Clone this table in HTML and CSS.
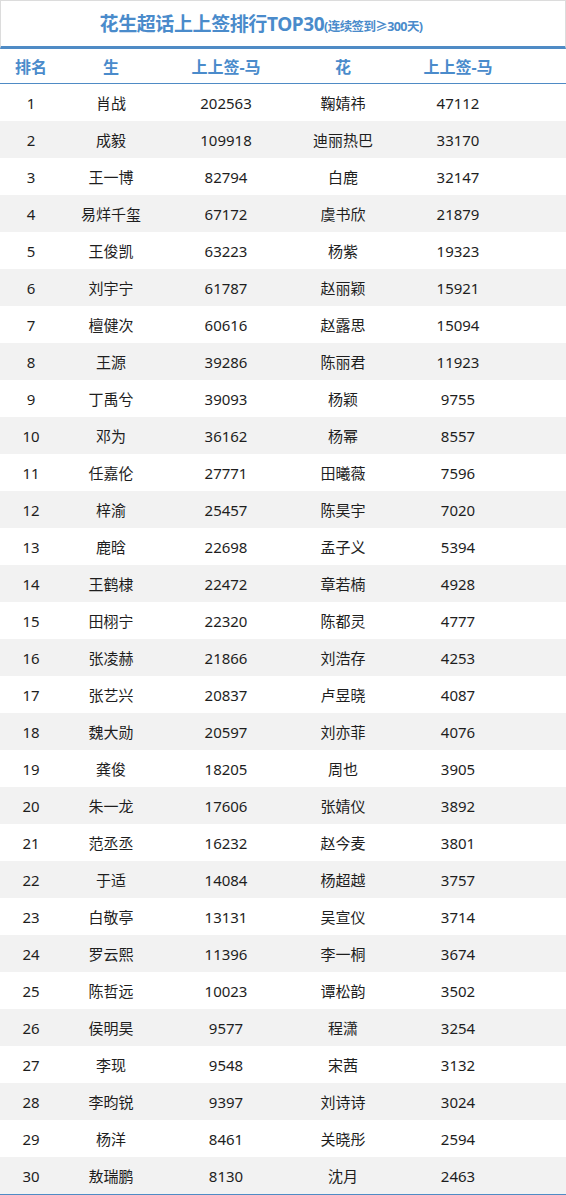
FILE: index.html
```html
<!DOCTYPE html>
<html lang="zh">
<head>
<meta charset="utf-8">
<link rel="stylesheet" href="styles.css">
</head>
<body>
<div class="board">
  <div class="title"><span class="main">花生超话上上签排行TOP30</span><span class="sub">(连续签到≥300天)</span></div>
  <div class="row head"><div>排名</div><div>生</div><div>上上签-马</div><div>花</div><div>上上签-马</div><div></div></div>
  <div class="body">
    <div class="row"><div>1</div><div>肖战</div><div>202563</div><div>鞠婧祎</div><div>47112</div><div></div></div>
    <div class="row"><div>2</div><div>成毅</div><div>109918</div><div>迪丽热巴</div><div>33170</div><div></div></div>
    <div class="row"><div>3</div><div>王一博</div><div>82794</div><div>白鹿</div><div>32147</div><div></div></div>
    <div class="row"><div>4</div><div>易烊千玺</div><div>67172</div><div>虞书欣</div><div>21879</div><div></div></div>
    <div class="row"><div>5</div><div>王俊凯</div><div>63223</div><div>杨紫</div><div>19323</div><div></div></div>
    <div class="row"><div>6</div><div>刘宇宁</div><div>61787</div><div>赵丽颖</div><div>15921</div><div></div></div>
    <div class="row"><div>7</div><div>檀健次</div><div>60616</div><div>赵露思</div><div>15094</div><div></div></div>
    <div class="row"><div>8</div><div>王源</div><div>39286</div><div>陈丽君</div><div>11923</div><div></div></div>
    <div class="row"><div>9</div><div>丁禹兮</div><div>39093</div><div>杨颖</div><div>9755</div><div></div></div>
    <div class="row"><div>10</div><div>邓为</div><div>36162</div><div>杨幂</div><div>8557</div><div></div></div>
    <div class="row"><div>11</div><div>任嘉伦</div><div>27771</div><div>田曦薇</div><div>7596</div><div></div></div>
    <div class="row"><div>12</div><div>梓渝</div><div>25457</div><div>陈昊宇</div><div>7020</div><div></div></div>
    <div class="row"><div>13</div><div>鹿晗</div><div>22698</div><div>孟子义</div><div>5394</div><div></div></div>
    <div class="row"><div>14</div><div>王鹤棣</div><div>22472</div><div>章若楠</div><div>4928</div><div></div></div>
    <div class="row"><div>15</div><div>田栩宁</div><div>22320</div><div>陈都灵</div><div>4777</div><div></div></div>
    <div class="row"><div>16</div><div>张凌赫</div><div>21866</div><div>刘浩存</div><div>4253</div><div></div></div>
    <div class="row"><div>17</div><div>张艺兴</div><div>20837</div><div>卢昱晓</div><div>4087</div><div></div></div>
    <div class="row"><div>18</div><div>魏大勋</div><div>20597</div><div>刘亦菲</div><div>4076</div><div></div></div>
    <div class="row"><div>19</div><div>龚俊</div><div>18205</div><div>周也</div><div>3905</div><div></div></div>
    <div class="row"><div>20</div><div>朱一龙</div><div>17606</div><div>张婧仪</div><div>3892</div><div></div></div>
    <div class="row"><div>21</div><div>范丞丞</div><div>16232</div><div>赵今麦</div><div>3801</div><div></div></div>
    <div class="row"><div>22</div><div>于适</div><div>14084</div><div>杨超越</div><div>3757</div><div></div></div>
    <div class="row"><div>23</div><div>白敬亭</div><div>13131</div><div>吴宣仪</div><div>3714</div><div></div></div>
    <div class="row"><div>24</div><div>罗云熙</div><div>11396</div><div>李一桐</div><div>3674</div><div></div></div>
    <div class="row"><div>25</div><div>陈哲远</div><div>10023</div><div>谭松韵</div><div>3502</div><div></div></div>
    <div class="row"><div>26</div><div>侯明昊</div><div>9577</div><div>程潇</div><div>3254</div><div></div></div>
    <div class="row"><div>27</div><div>李现</div><div>9548</div><div>宋茜</div><div>3132</div><div></div></div>
    <div class="row"><div>28</div><div>李昀锐</div><div>9397</div><div>刘诗诗</div><div>3024</div><div></div></div>
    <div class="row"><div>29</div><div>杨洋</div><div>8461</div><div>关晓彤</div><div>2594</div><div></div></div>
    <div class="row"><div>30</div><div>敖瑞鹏</div><div>8130</div><div>沈月</div><div>2463</div><div></div></div>
  </div>
</div>
</body>
</html>
```
FILE: styles.css
```css
html, body {
  margin: 0;
  padding: 0;
  background: #ffffff;
}
.board {
  width: 566px;
  font-family: "Noto Sans", "Noto Sans CJK SC", sans-serif;
  color: #1e1e1e;
}
.title {
  box-sizing: border-box;
  border-top: 1px solid #dcdcdc;
  border-left: 1px solid #dcdcdc;
  border-right: 1px solid #dcdcdc;
  border-bottom: 3px solid #4f8bc5;
  height: 49px;
  display: flex;
  align-items: center;
  justify-content: center;
  padding-right: 44px;
  padding-bottom: 2px;
  color: #4a8bcb;
  font-weight: 700;
}
.title .main {
  font-size: 19px;
  letter-spacing: -0.4px;
}
.title .sub {
  font-size: 12.5px;
  font-weight: 700;
  letter-spacing: -0.6px;
  margin-top: 5px;
}
.row {
  display: grid;
  grid-template-columns: 60px 100px 130px 104px 126px 1fr;
  height: 37px;
  align-items: center;
  font-size: 15px;
  text-align: center;
  padding-left: 1px;
}
.row.head {
  height: 35px;
  box-sizing: border-box;
  border-bottom: 1px solid #4f8bc5;
  color: #4a8bcb;
  font-weight: 700;
  font-size: 16px;
  padding-bottom: 1px;
}
.body {
  border-bottom: 2px solid #4f8bc5;
}
.body .row:nth-child(even) {
  background: #f2f2f2;
}
```
